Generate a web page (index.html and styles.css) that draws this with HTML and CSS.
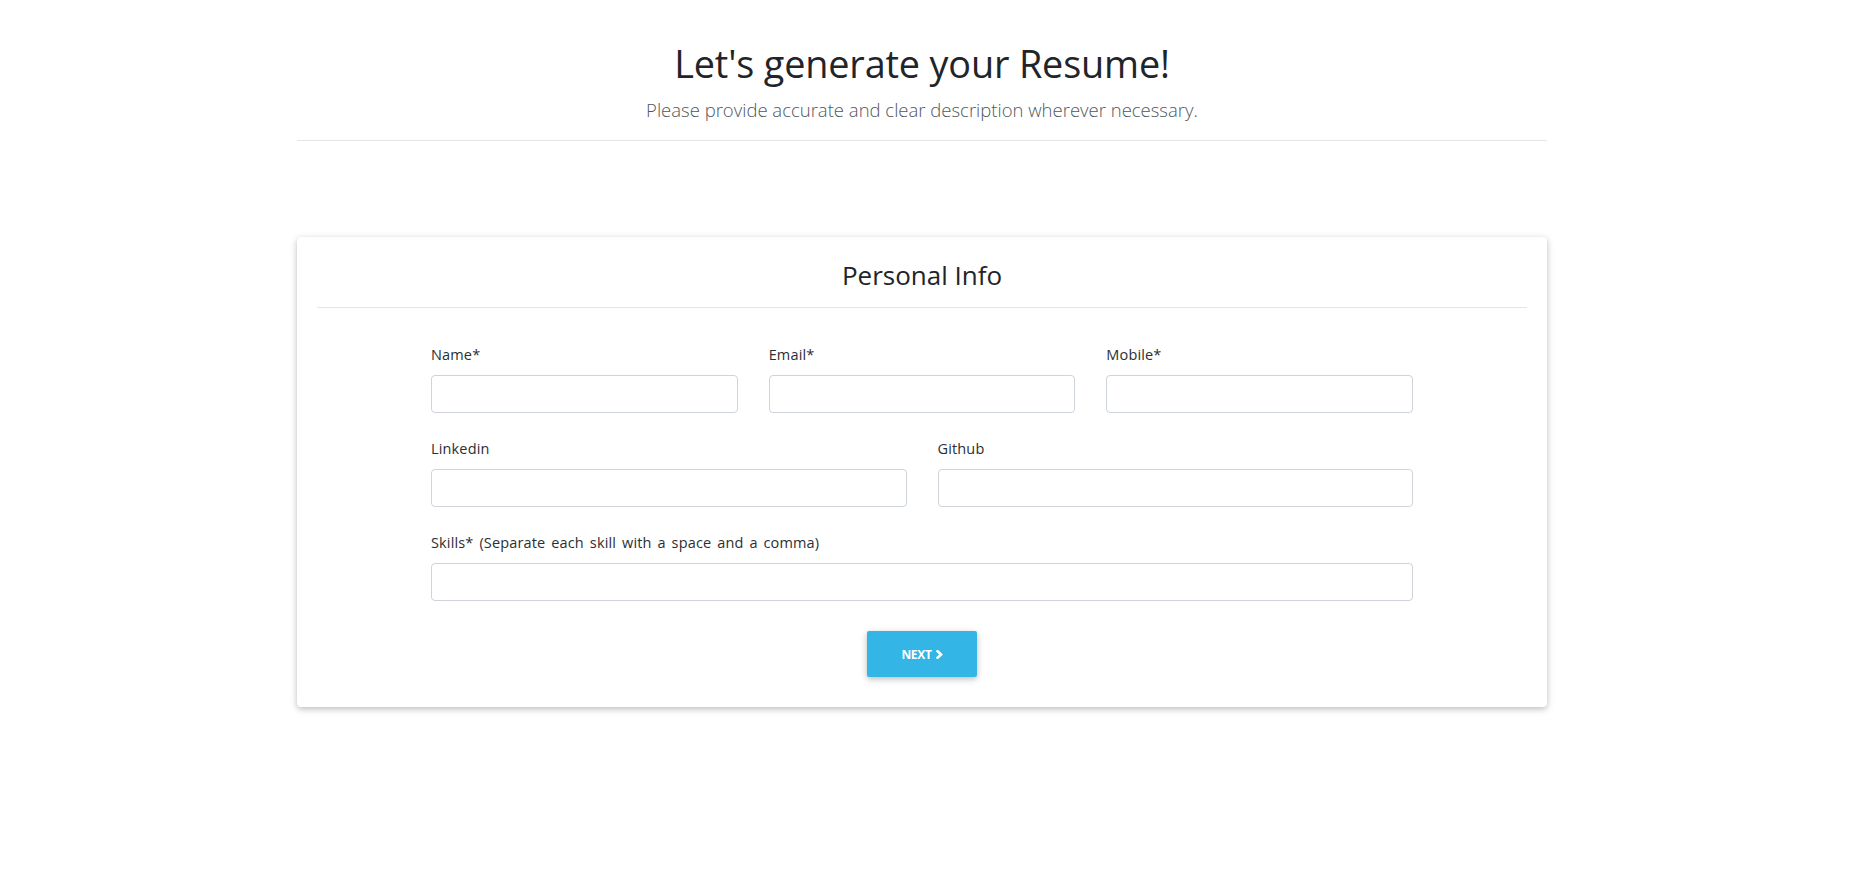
FILE: index.html
```html
<!DOCTYPE html>
<html lang="en">
<head>
<meta charset="utf-8">
<title>Resume Generator</title>
<link rel="stylesheet" href="styles.css">
</head>
<body>
<div class="page">
  <header class="intro">
    <h1 class="intro-title">Let's generate your Resume!</h1>
    <p class="intro-lead">Please provide accurate and clear description wherever necessary.</p>
    <hr class="intro-rule">
  </header>

  <section class="card">
    <h3 class="card-title">Personal Info</h3>
    <hr class="card-rule">
    <form class="form">
      <div class="row row-3">
        <div class="field">
          <label class="field-label" for="name">Name*</label>
          <input class="field-input" id="name" type="text">
        </div>
        <div class="field">
          <label class="field-label" for="email">Email*</label>
          <input class="field-input" id="email" type="email">
        </div>
        <div class="field">
          <label class="field-label" for="mobile">Mobile*</label>
          <input class="field-input" id="mobile" type="text">
        </div>
      </div>
      <div class="row row-2">
        <div class="field">
          <label class="field-label" for="linkedin">Linkedin</label>
          <input class="field-input" id="linkedin" type="text">
        </div>
        <div class="field">
          <label class="field-label" for="github">Github</label>
          <input class="field-input" id="github" type="text">
        </div>
      </div>
      <div class="row row-1">
        <div class="field">
          <label class="field-label" for="skills">Skills* (Separate each skill with a space and a comma)</label>
          <input class="field-input" id="skills" type="text">
        </div>
      </div>
      <div class="actions">
        <button class="btn-next" type="button">NEXT <svg class="chev" width="7" height="9" viewBox="0 0 7 9" aria-hidden="true"><polyline points="1.6,1.2 5,4.5 1.6,7.8" fill="none" stroke="#fff" stroke-width="2.6" stroke-linecap="square" stroke-linejoin="miter"/></svg></button>
      </div>
    </form>
  </section>
</div>
</body>
</html>
```

FILE: styles.css
```css
* { box-sizing: border-box; }

html, body {
  margin: 0;
  background: #fff;
}

body {
  font-family: "Open Sans", "Noto Sans", sans-serif;
  color: #212529;
  font-size: 16px;
  line-height: 1.5;
}

.page {
  padding-right: 19px;
  padding-bottom: 40px;
}

.intro {
  width: 1250px;
  margin: 0 auto;
  padding-top: 41px;
  text-align: center;
}

.intro-title {
  margin: 0 0 8.5px;
  font-size: 37.8px;
  font-weight: 400;
  line-height: 45px;
  letter-spacing: -0.15px;
}

.intro-lead {
  margin: 0;
  font-size: 18.5px;
  font-weight: 300;
  color: #51575d;
  line-height: 30px;
}

.intro-rule {
  margin: 15.5px 0 0;
  border: 0;
  border-top: 1px solid rgba(0, 0, 0, 0.1);
}

.card {
  width: 1250px;
  margin: 96px auto 0;
  padding: 21px 20px 30px;
  background: #fff;
  border-radius: 4px;
  box-shadow: 0 2px 5px 0 rgba(0, 0, 0, 0.16), 0 2px 10px 0 rgba(0, 0, 0, 0.12);
}

.card-title {
  margin: 0;
  text-align: center;
  font-size: 26px;
  font-weight: 400;
  line-height: 34px;
  color: #212529;
}

.card-rule {
  margin: 14.5px 0 0;
  border: 0;
  border-top: 1px solid rgba(0, 0, 0, 0.1);
}

.form {
  width: 982px;
  margin: 36.5px auto 0;
}

.row {
  display: grid;
  column-gap: 31px;
  margin-bottom: 25px;
}

.row-3 { grid-template-columns: repeat(3, 1fr); }
.row-2 { grid-template-columns: repeat(2, 1fr); }
.row-1 { grid-template-columns: 1fr; }

.field {
  display: flex;
  flex-direction: column;
}

.field-label {
  font-size: 14.5px;
  line-height: 22px;
  word-spacing: 2px;
  letter-spacing: 0.15px;
  margin-bottom: 9px;
  color: #2b2f33;
}

.field-input {
  height: 38px;
  width: 100%;
  border: 1px solid #ced4da;
  border-radius: 4px;
  background: #fff;
  padding: 6px 12px;
  font: inherit;
  outline: none;
}

.actions {
  display: flex;
  justify-content: center;
  padding-top: 5px;
}

.btn-next {
  display: inline-flex;
  align-items: center;
  gap: 4px;
  height: 46px;
  width: 110px;
  justify-content: center;
  border: 0;
  border-radius: 2px;
  background: #33b5e5;
  color: #fff;
  font-family: "Open Sans", "Noto Sans", sans-serif;
  font-size: 12px;
  font-weight: 700;
  letter-spacing: -0.3px;
  box-shadow: 0 2px 5px 0 rgba(0, 0, 0, 0.16), 0 2px 10px 0 rgba(0, 0, 0, 0.12);
  cursor: pointer;
}

.chev {
  display: block;
}
```
